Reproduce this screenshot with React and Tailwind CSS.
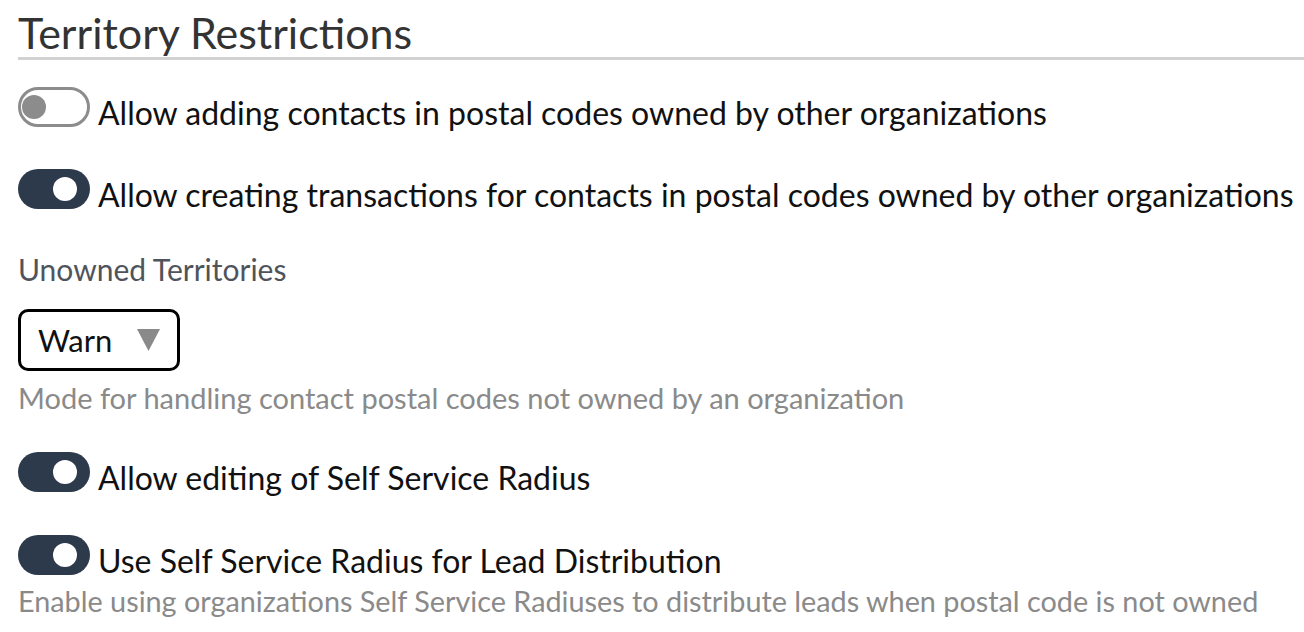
import React, { useState } from 'react';

function Toggle({ on, onChange }) {
  if (on) {
    return (
      <button
        onClick={onChange}
        className="flex h-[40px] w-[72px] shrink-0 items-center rounded-full bg-[#2d3a4b] pl-[35px]"
      >
        <span className="h-[24px] w-[24px] rounded-full bg-white" />
      </button>
    );
  }
  return (
    <button
      onClick={onChange}
      className="flex h-[40px] w-[72px] shrink-0 items-center rounded-full border-[3px] border-[#8c8c8c] bg-white pl-[1px]"
    >
      <span className="h-[24px] w-[24px] rounded-full bg-[#8c8c8c]" />
    </button>
  );
}

function ToggleRow({ label, on, onChange, className = '' }) {
  return (
    <div className={`flex h-[40px] items-start gap-[8px] ${className}`}>
      <Toggle on={on} onChange={onChange} />
      <span className="whitespace-nowrap pt-[6px] text-[32px] leading-[40px] text-[#111]">{label}</span>
    </div>
  );
}

export default function App() {
  const [settings, setSettings] = useState({
    addContacts: false,
    createTransactions: true,
    editRadius: true,
    useRadius: true,
  });
  const [mode, setMode] = useState('Warn');

  const flip = (key) => setSettings((s) => ({ ...s, [key]: !s[key] }));

  return (
    <div className="min-h-[632px] overflow-hidden bg-white pl-[18px] font-[Lato,sans-serif]">
      <h2 className="border-b-[3px] border-[#d2d2d2] pt-[9px] text-[43px] font-normal leading-[48px] text-[#333]">
        Territory Restrictions
      </h2>

      <ToggleRow
        className="mt-[27px]"
        label="Allow adding contacts in postal codes owned by other organizations"
        on={settings.addContacts}
        onChange={() => flip('addContacts')}
      />
      <ToggleRow
        className="mt-[42px]"
        label="Allow creating transactions for contacts in postal codes owned by other organizations"
        on={settings.createTransactions}
        onChange={() => flip('createTransactions')}
      />

      <div className="mt-[42px] text-[30px] leading-[36px] text-[#4f545c]">Unowned Territories</div>

      <div className="mt-[22px] flex h-[62px] w-[162px] items-center justify-between rounded-[10px] border-[3px] border-black pl-[17px] pr-[17px]">
        <span className="text-[31px] leading-[37px] text-[#111]">{mode}</span>
        <svg width="23" height="22" viewBox="0 0 23 22" onClick={() => setMode(mode)}>
          <polygon points="0,0 23,0 11.5,22" fill="#8a8a8a" />
        </svg>
      </div>
      <div className="mt-[12px] text-[29px] leading-[30px] text-[#8a8a8a]">
        Mode for handling contact postal codes not owned by an organization
      </div>

      <ToggleRow
        className="mt-[39px]"
        label="Allow editing of Self Service Radius"
        on={settings.editRadius}
        onChange={() => flip('editRadius')}
      />
      <ToggleRow
        className="mt-[43px]"
        label="Use Self Service Radius for Lead Distribution"
        on={settings.useRadius}
        onChange={() => flip('useRadius')}
      />
      <div className="mt-[11px] whitespace-nowrap text-[28.8px] leading-[30px] text-[#8a8a8a]">
        Enable using organizations Self Service Radiuses to distribute leads when postal code is not owned
      </div>
    </div>
  );
}
